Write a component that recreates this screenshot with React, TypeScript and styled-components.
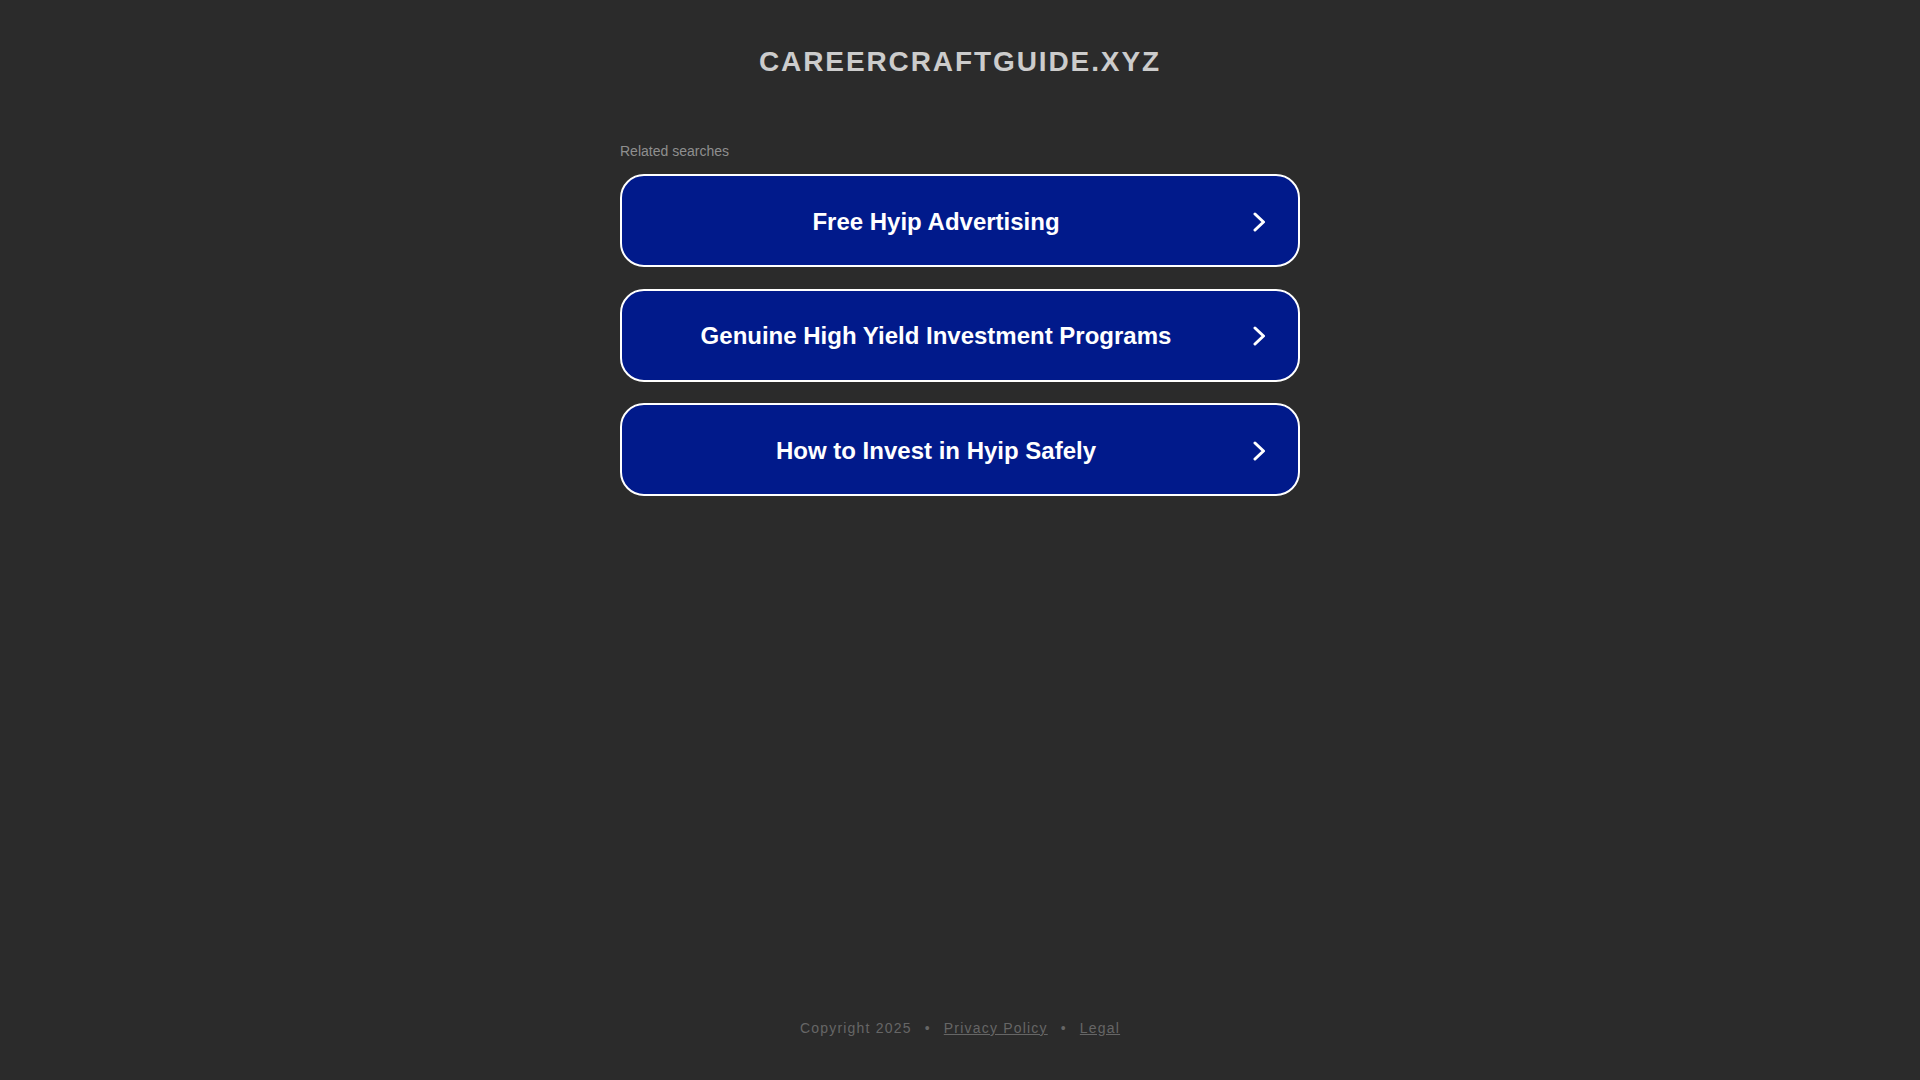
import React from "react";
import styled, { createGlobalStyle } from "styled-components";

const GlobalStyle = createGlobalStyle`
    html, body {
        margin: 0;
        padding: 0;
        background-color: #2b2b2b;
        font-family: "Liberation Sans", Arial, sans-serif;
    }
`;

const Page = styled.div`
    display: flex;
    flex-direction: column;
    align-items: center;
    min-height: 100vh;
    box-sizing: border-box;
`;

const DomainTitle = styled.h1`
    margin: 46px 0 0;
    font-size: 28px;
    line-height: 32px;
    font-weight: bold;
    letter-spacing: 1.9px;
    color: #cccccc;
    text-align: center;
`;

const Searches = styled.section`
    width: 680px;
    margin-top: 63px;
    display: flex;
    flex-direction: column;
`;

const Label = styled.div`
    font-size: 14px;
    line-height: 20px;
    color: #8f8f8f;
    margin-bottom: 13px;
`;

const LinkList = styled.div`
    display: flex;
    flex-direction: column;
    gap: 21.5px;
`;

const SearchLink = styled.a`
    display: flex;
    align-items: center;
    gap: 37px;
    height: 93px;
    box-sizing: border-box;
    padding: 2px 32px 0 34px;
    border: 2px solid #ffffff;
    border-radius: 24px;
    background-color: #011a8b;
    color: #ffffff;
    text-decoration: none;
    cursor: pointer;
`;

const LinkText = styled.span`
    flex: 1;
    text-align: center;
    font-size: 24px;
    font-weight: bold;
`;

const Chevron = styled.svg`
    flex: none;
    width: 13px;
    height: 20px;
`;

const Footer = styled.footer`
    margin-top: auto;
    padding-bottom: 42px;
    font-size: 14px;
    line-height: 20px;
    letter-spacing: 1.2px;
    color: #666666;
    display: flex;
    gap: 13px;
`;

const FooterLink = styled.a`
    color: #666666;
    text-decoration: underline;
    cursor: pointer;
`;

const links = [
    "Free Hyip Advertising",
    "Genuine High Yield Investment Programs",
    "How to Invest in Hyip Safely",
];

const App = () => {
    return (
        <Page>
            <GlobalStyle />
            <DomainTitle>CAREERCRAFTGUIDE.XYZ</DomainTitle>
            <Searches>
                <Label>Related searches</Label>
                <LinkList>
                    {links.map((text) => (
                        <SearchLink key={text}>
                            <LinkText>{text}</LinkText>
                            <Chevron viewBox="0 0 13 20">
                                <polyline points="2,2 10.5,10 2,18" fill="none" stroke="#ffffff" strokeWidth="3" strokeLinecap="round" strokeLinejoin="round" />
                            </Chevron>
                        </SearchLink>
                    ))}
                </LinkList>
            </Searches>
            <Footer>
                <span>Copyright 2025</span>
                <span>•</span>
                <FooterLink>Privacy Policy</FooterLink>
                <span>•</span>
                <FooterLink>Legal</FooterLink>
            </Footer>
        </Page>
    );
};

export default App;
